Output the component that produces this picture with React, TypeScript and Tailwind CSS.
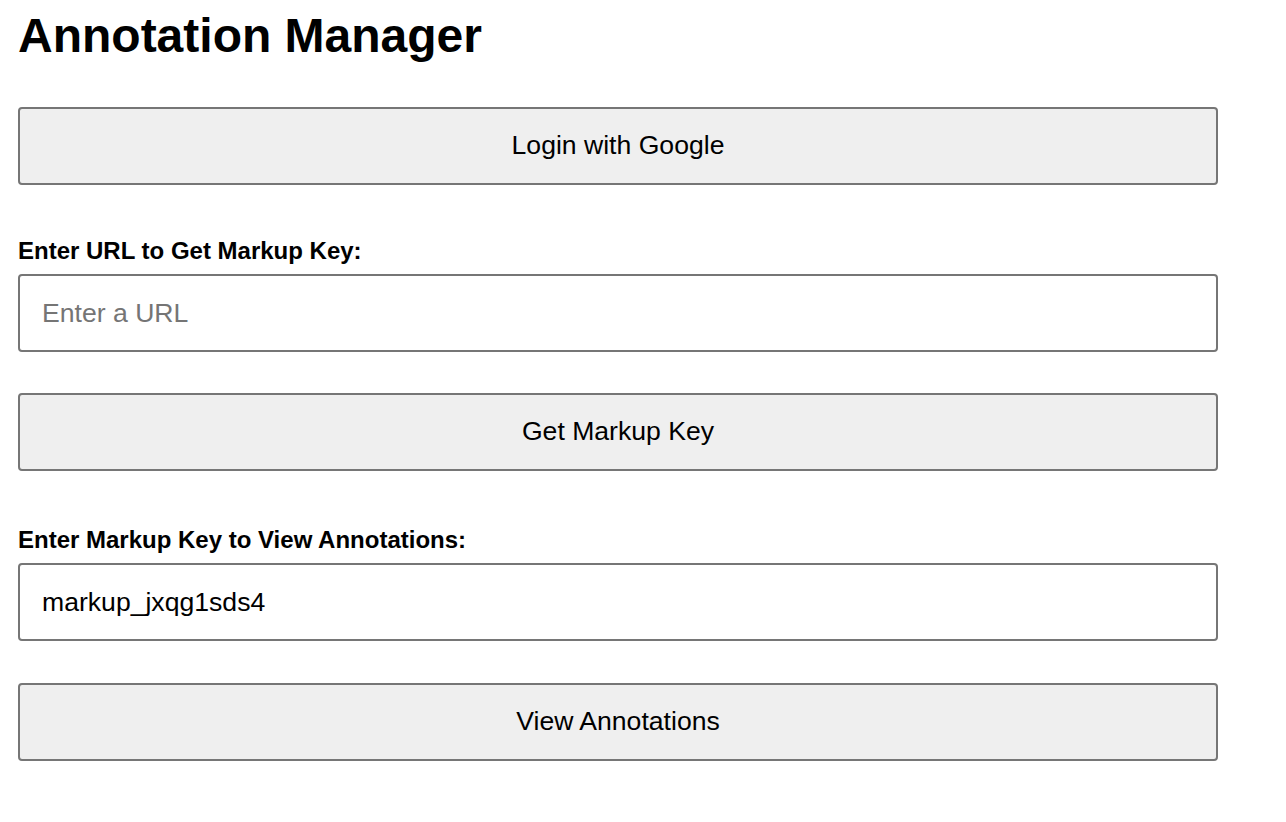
import { useState } from "react";

export default function App() {
  const [url, setUrl] = useState("");
  const [key, setKey] = useState("markup_jxqg1sds4");

  const btn =
    "block h-[78px] w-full rounded-[4px] border-2 border-[#767676] bg-[#efefef] text-center text-[26.6px] text-black";
  const input =
    "block h-[78px] w-full rounded-[4px] border-2 border-[#767676] bg-white px-[22px] text-[26.6px] text-black outline-none placeholder:text-[#757575]";

  return (
    <div className="min-h-screen bg-white px-[18px] pt-[9px] font-['Liberation_Sans',Arial,sans-serif] text-black">
      <div className="w-[1200px]">
        <h1 className="text-[48px] font-bold leading-[54px]">Annotation Manager</h1>

        <button type="button" className={`${btn} mt-[44px]`}>
          Login with Google
        </button>

        <label className="mt-[52px] block text-[24px] font-bold leading-[27px]">
          Enter URL to Get Markup Key:
        </label>
        <input
          className={`${input} mt-[10px]`}
          placeholder="Enter a URL"
          value={url}
          onChange={(e) => setUrl(e.target.value)}
        />

        <button type="button" className={`${btn} mt-[41px]`}>
          Get Markup Key
        </button>

        <label className="mt-[55px] block text-[24px] font-bold leading-[27px]">
          Enter Markup Key to View Annotations:
        </label>
        <input
          className={`${input} mt-[10px]`}
          value={key}
          onChange={(e) => setKey(e.target.value)}
        />

        <button type="button" className={`${btn} mt-[42px]`}>
          View Annotations
        </button>
      </div>
    </div>
  );
}
